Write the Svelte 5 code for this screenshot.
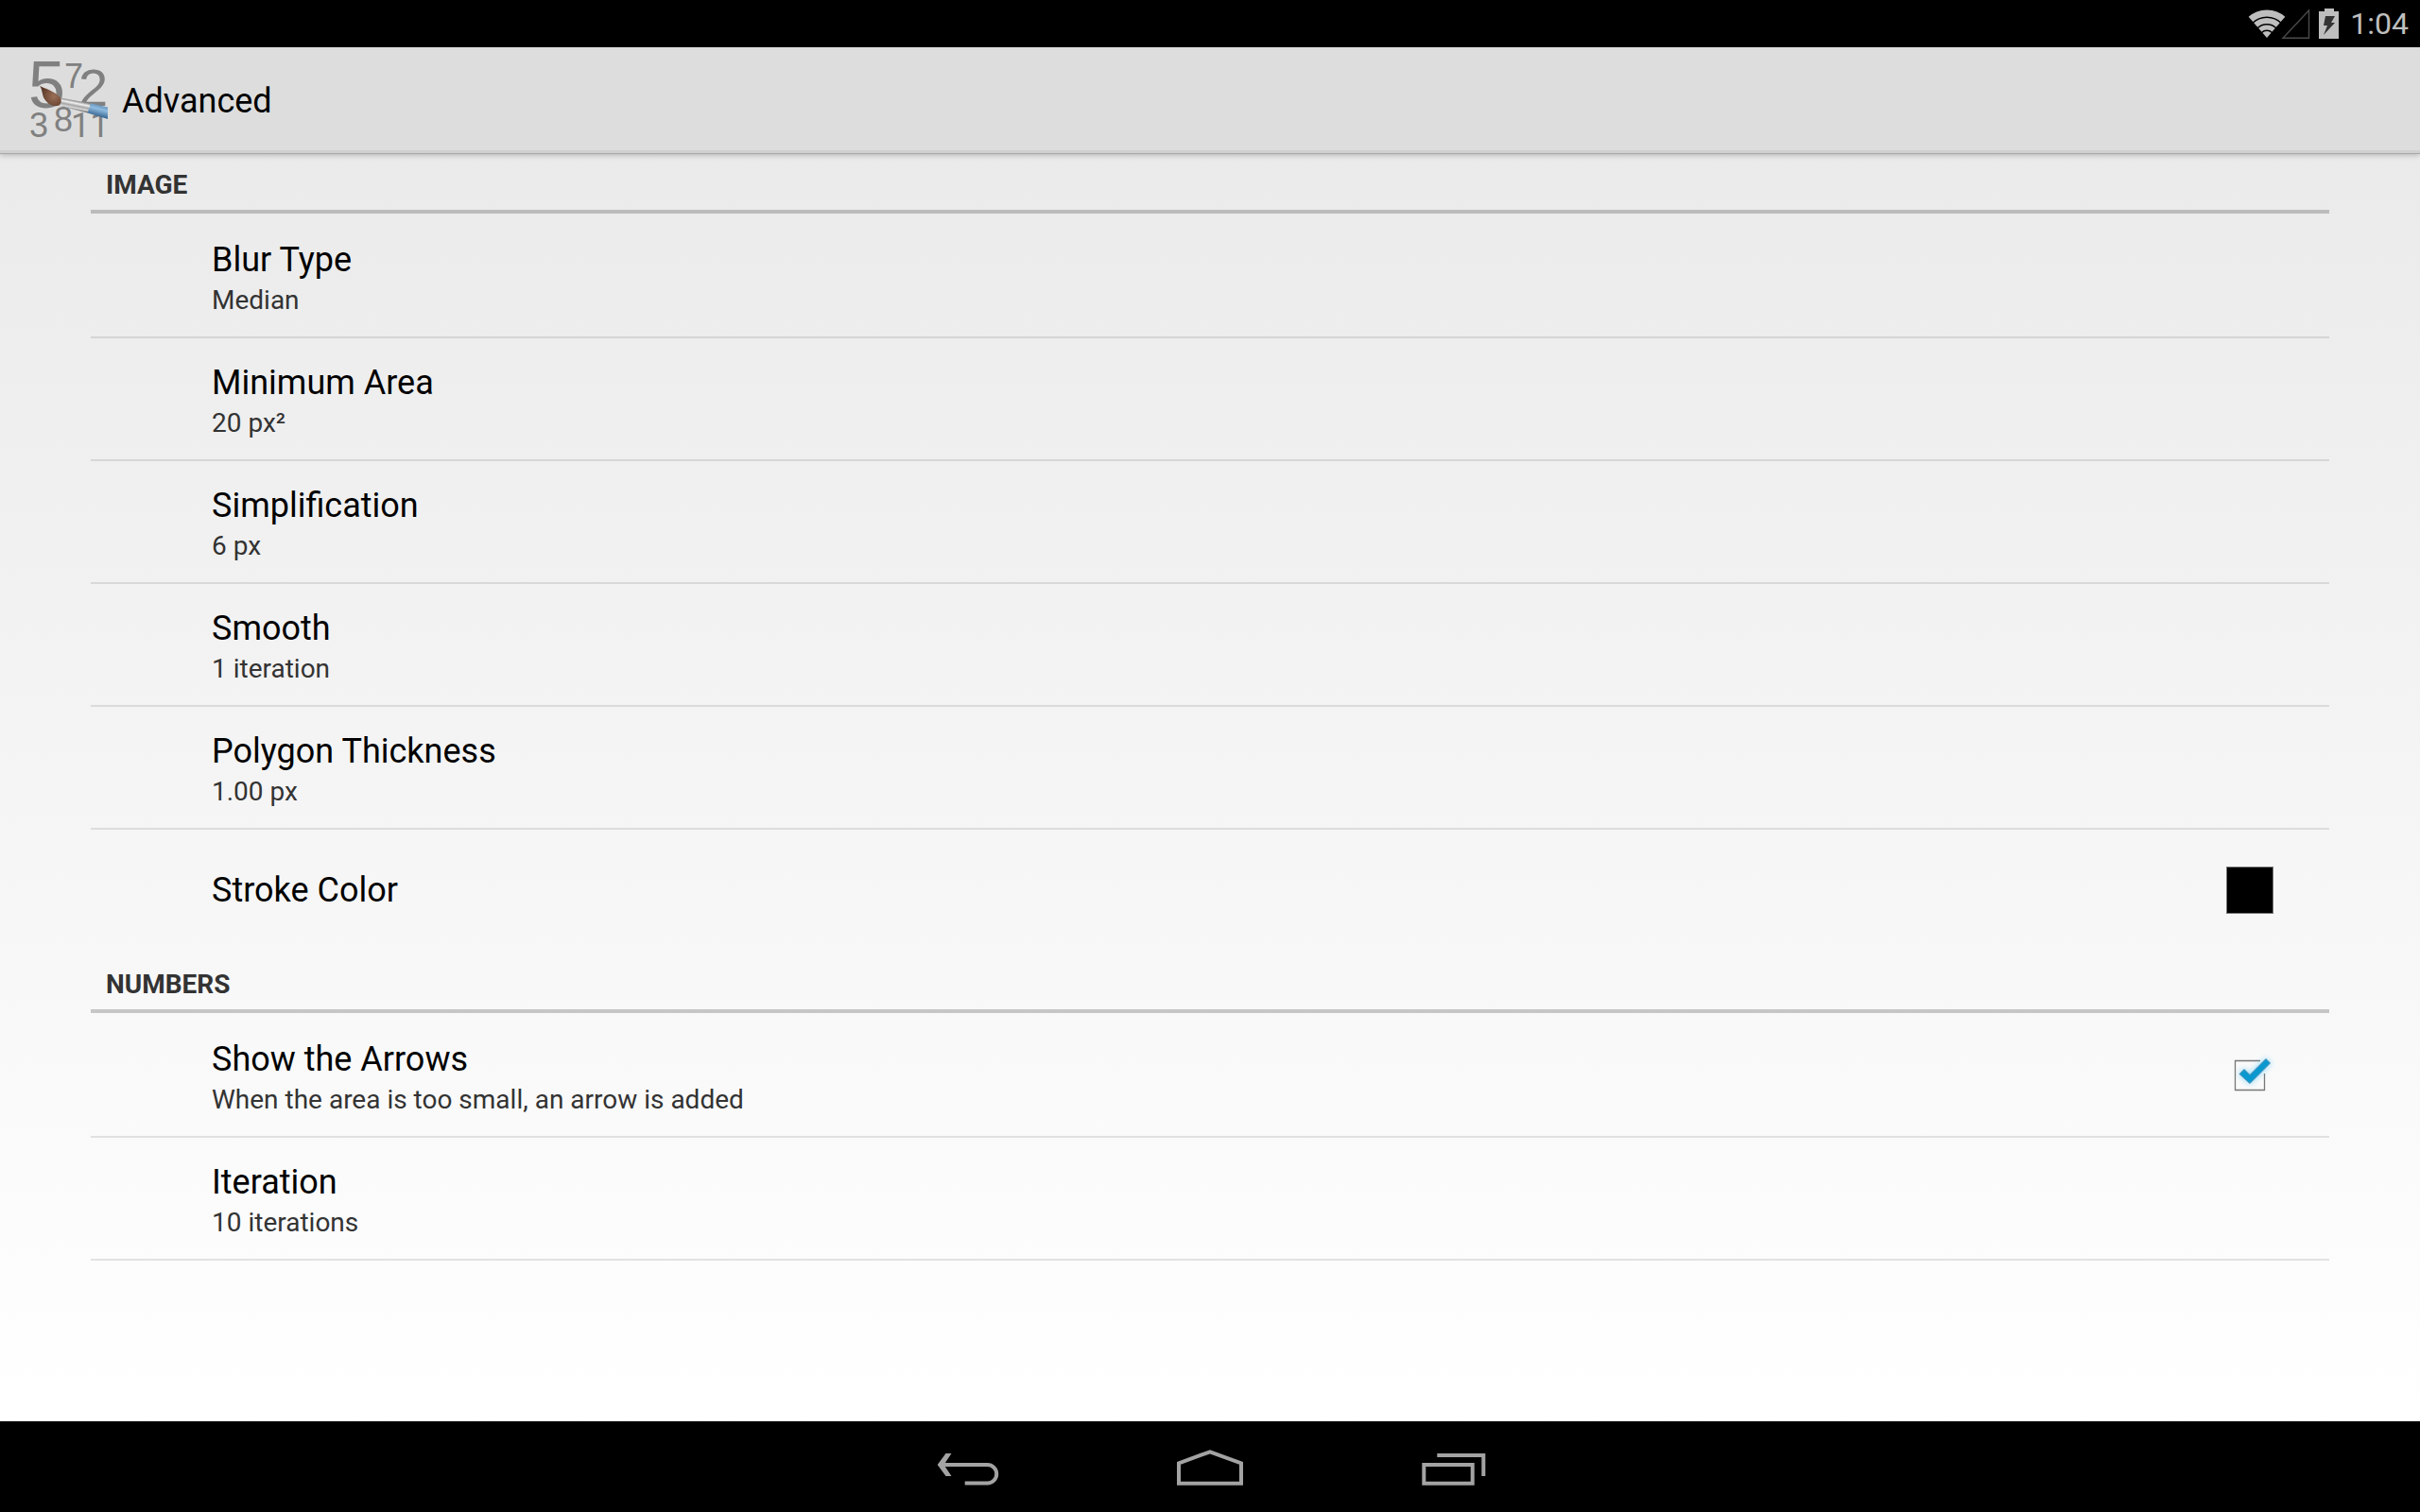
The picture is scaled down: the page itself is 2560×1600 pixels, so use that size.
<script>
  let showArrows = $state(true);

  const image = [
    { title: 'Blur Type', summary: 'Median' },
    { title: 'Minimum Area', summary: '20 px²' },
    { title: 'Simplification', summary: '6 px' },
    { title: 'Smooth', summary: '1 iteration' },
    { title: 'Polygon Thickness', summary: '1.00 px' }
  ];
</script>

<div class="screen">
  <div class="status">
    <svg class="wifi" viewBox="0 0 40 32" width="40" height="32" aria-label="Wi-Fi">
      <defs>
        <clipPath id="fan"><path d="M20 31 L0 8 Q20 -8 40 8 Z" /></clipPath>
      </defs>
      <g clip-path="url(#fan)" fill="none" stroke="#bebebe">
        <circle cx="20" cy="31" r="7" fill="#bebebe" stroke="none" />
        <circle cx="20" cy="31" r="11" stroke-width="5" />
        <circle cx="20" cy="31" r="18" stroke-width="6" />
        <circle cx="20" cy="31" r="26" stroke-width="7" />
      </g>
    </svg>
    <svg class="cell" viewBox="0 0 32 34" width="32" height="34" aria-label="No signal">
      <path d="M2 32.2 H29.5 V3 Z" fill="none" stroke="#4a4a4a" stroke-width="1.4" />
    </svg>
    <svg class="battery" viewBox="0 0 22 34" width="22" height="34" aria-label="Charging">
      <path d="M6 1 H16 V4 H21 V33 H0 V4 H6 Z" fill="#bebebe" />
      <path d="M7 9 H17 L13 16 H17 L5 29 L9 19 H5 Z" fill="#333" />
    </svg>
    <span class="clock">1:04</span>
  </div>

  <header class="bar">
    <svg class="logo" viewBox="32 63 84 88" width="84" height="88" aria-hidden="true">
      <defs>
        <linearGradient id="ferrule" gradientUnits="userSpaceOnUse" x1="79" y1="106" x2="77" y2="116">
          <stop offset="0" stop-color="#7c7c7c" />
          <stop offset="0.3" stop-color="#f2f2f2" />
          <stop offset="0.55" stop-color="#a5a5a5" />
          <stop offset="0.8" stop-color="#dadada" />
          <stop offset="1" stop-color="#5e5e5e" />
        </linearGradient>
        <linearGradient id="handle" gradientUnits="userSpaceOnUse" x1="105" y1="111" x2="102" y2="123">
          <stop offset="0" stop-color="#6695bd" />
          <stop offset="0.35" stop-color="#8fbbe0" />
          <stop offset="1" stop-color="#37648e" />
        </linearGradient>
        <radialGradient id="bristle" gradientUnits="userSpaceOnUse" cx="57" cy="102" r="14">
          <stop offset="0" stop-color="#9a7058" />
          <stop offset="0.6" stop-color="#77503b" />
          <stop offset="1" stop-color="#5a3a2a" />
        </radialGradient>
      </defs>
      <g class="digits">
        <text x="30" y="114" font-size="70">5</text>
        <text x="68" y="93" font-size="36">7</text>
        <text x="83" y="112" font-size="56">2</text>
        <text x="31" y="145" font-size="36">3</text>
        <text x="57" y="139" font-size="36">8</text>
        <text class="ones" x="75" y="145" font-size="36">11</text>
      </g>
      <path d="M64 103.5 L96 109.5 L93 119.5 L62 111.5 Z" fill="url(#ferrule)" />
      <path d="M96 109.3 L114 113.5 V126 L92.5 119.5 Z" fill="url(#handle)" />
      <path d="M42 91 C46 93 59 97 64 103.5 Q66 108 62.5 111.5 C56 114 49 109 46 103 C44.5 99 44.5 94 42 91 Z" fill="url(#bristle)" />
    </svg>
    <h1>Advanced</h1>
  </header>

  <main>
    <section>
      <h2>Image</h2>
      <ul>
        {#each image as row}
          <li>
            <button class="row">
              <span class="title">{row.title}</span>
              <span class="summary">{row.summary}</span>
            </button>
          </li>
        {/each}
        <li>
          <button class="row split">
            <span class="title">Stroke Color</span>
            <span class="swatch"></span>
          </button>
        </li>
      </ul>
    </section>

    <section>
      <h2>Numbers</h2>
      <ul>
        <li>
          <label class="row split">
            <span class="text">
              <span class="title">Show the Arrows</span>
              <span class="summary">When the area is too small, an arrow is added</span>
            </span>
            <span class="check">
              <input type="checkbox" bind:checked={showArrows} />
              <svg viewBox="0 1 64 64" width="64" height="64" aria-hidden="true">
                {#if showArrows}
                  <path d="M43 17.5 H16.5 V48.5 H47.5 V31" fill="none" stroke="#777" stroke-width="1.3" />
                  <path class="tick" d="M21 31.5 L26 26.5 L32 32.5 L49 15.5 L53.5 20 L32 41.5 Z" />
                {:else}
                  <rect x="16.5" y="17.5" width="31" height="31" fill="none" stroke="#777" />
                {/if}
              </svg>
            </span>
          </label>
        </li>
        <li>
          <button class="row">
            <span class="title">Iteration</span>
            <span class="summary">10 iterations</span>
          </button>
        </li>
      </ul>
    </section>
  </main>

  <nav>
    <button aria-label="Back">
      <svg viewBox="0 -2 80 60" width="80" height="60" fill="none" stroke="#a3a3a3" stroke-width="4">
        <path d="M12 26 H60.500 A9.700 9.700 0 0 1 60.500 45.500 H36.700" />
        <path d="M16.500 14 H22.500 L14.500 26 L22.500 38 H16.500 L7.700 26 Z" fill="#a3a3a3" stroke="none" />
      </svg>
    </button>
    <button aria-label="Home">
      <svg viewBox="0 -2 80 60" width="80" height="60" fill="none" stroke="#a3a3a3" stroke-width="4">
        <path d="M7 45.700 V24.300 L40 12.300 L73 24.300 V45.700 Z" />
      </svg>
    </button>
    <button aria-label="Recent apps">
      <svg viewBox="0 -2 80 60" width="80" height="60" fill="none" stroke="#a3a3a3" stroke-width="4">
        <path d="M10.300 26 H61.700 V45.700 H10.300 Z" />
        <path d="M24.300 16 H73.300 V38" />
      </svg>
    </button>
  </nav>
</div>

<style>
  .screen {
    min-height: 100vh;
    display: flex;
    flex-direction: column;
    background: linear-gradient(#e8e8e8, #fff 94%);
    font-family: Roboto, "Noto Sans", sans-serif;
    color: #000;
  }

  .status {
    height: 50px;
    display: flex;
    align-items: center;
    justify-content: flex-end;
    padding-right: 12px;
    background: #000;
  }
  .wifi { margin-right: -5px; }
  .cell { margin-right: 8px; }
  .battery { margin-right: 11px; }
  .clock {
    font-size: 32px;
    line-height: 50px;
    color: #bebebe;
  }

  .bar {
    height: 112px;
    box-sizing: border-box;
    display: flex;
    align-items: center;
    gap: 13px;
    padding: 2px 32px 0;
    background: #ddd;
    box-shadow: inset 0 -3px 0 #d0d0d0, 0 1px 0 #a9a9a9, 0 2px 6px rgba(0, 0, 0, 0.25);
  }
  .logo {
    flex: none;
    overflow: visible;
  }
  .digits {
    font-family: "Liberation Sans", sans-serif;
    fill: #808080;
  }
  .ones { font-family: Roboto, sans-serif; }
  h1 {
    margin: 0;
    font-size: 36px;
    font-weight: 400;
    line-height: 42px;
  }

  main {
    flex: 1;
    padding: 0 96px;
  }
  h2 {
    height: 64px;
    box-sizing: border-box;
    margin: 0 0 2px;
    padding: 17px 16px 0;
    border-bottom: 4px solid rgba(0, 0, 0, 0.2);
    font-size: 28px;
    font-weight: 700;
    line-height: 34px;
    text-transform: uppercase;
    color: #333;
  }
  ul {
    margin: 0;
    padding: 0;
    list-style: none;
  }
  li { border-bottom: 2px solid rgba(0, 0, 0, 0.1); }
  section:first-child li:last-child { border-color: transparent; }

  .row {
    width: 100%;
    min-height: 128px;
    box-sizing: border-box;
    display: flex;
    flex-direction: column;
    justify-content: center;
    padding: 0 16px 0 128px;
    border: 0;
    background: none;
    font: inherit;
    color: inherit;
    text-align: left;
  }
  .split {
    flex-direction: row;
    align-items: center;
    justify-content: space-between;
  }
  .text {
    display: flex;
    flex-direction: column;
  }
  .title {
    font-size: 36px;
    line-height: 52px;
  }
  .summary {
    font-size: 28px;
    line-height: 34px;
    color: #333;
  }
  .swatch {
    width: 50px;
    height: 50px;
    box-sizing: border-box;
    margin-right: 43px;
    border: 1px solid #777;
    background: #000;
  }
  .check {
    display: grid;
    margin-right: 36px;
  }
  .check > * { grid-area: 1 / 1; }
  .check input {
    width: 64px;
    height: 64px;
    margin: 0;
    opacity: 0;
  }
  .tick {
    fill: #0a98d0;
    stroke: #4e8fae;
    stroke-width: 1px;
    filter: drop-shadow(0 0 3px rgba(80, 200, 255, 0.7));
  }

  nav {
    height: 96px;
    display: flex;
    align-items: center;
    justify-content: center;
    gap: 96px;
    background: #000;
  }
  nav button {
    width: 160px;
    height: 96px;
    display: flex;
    align-items: center;
    justify-content: center;
    padding: 0;
    border: 0;
    background: none;
  }
</style>
